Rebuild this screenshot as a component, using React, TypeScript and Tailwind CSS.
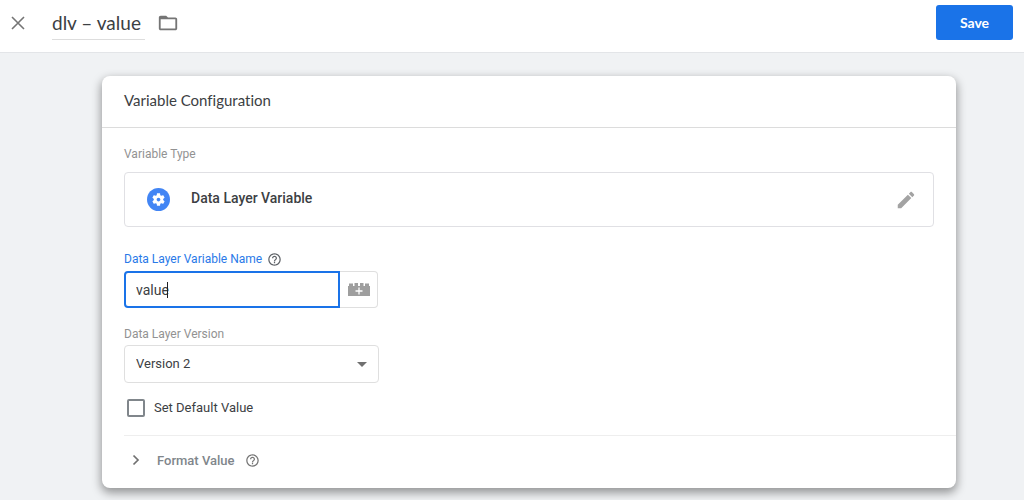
import { useState } from "react";

function HelpIcon({ className }: { className: string }) {
  return (
    <svg viewBox="0 0 24 24" className={className} fill="currentColor" aria-hidden="true">
      <path d="M11 18h2v-2h-2v2zm1-16C6.48 2 2 6.48 2 12s4.480 10 10 10 10-4.480 10-10S17.520 2 12 2zm0 18c-4.410 0-8-3.590-8-8s3.590-8 8-8 8 3.590 8 8-3.590 8-8 8zm0-14c-2.210 0-4 1.790-4 4h2c0-1.100.9-2 2-2s2 .9 2 2c0 2-3 1.750-3 5h2c0-2.250 3-2.500 3-5 0-2.210-1.790-4-4-4z" />
    </svg>
  );
}

function Header() {
  const [name, setName] = useState("dlv – value");
  return (
    <header className="flex h-[53px] items-start border-b border-[#e3e5e8] bg-white pl-2 pr-[11px] pt-[5px]">
      <button type="button" aria-label="Close" className="mt-2 flex size-5 items-center justify-center text-[#757575]">
        <svg viewBox="0 0 14 14" className="size-[14px]" fill="none" stroke="currentColor" strokeWidth="1.6" aria-hidden="true">
          <path d="M1 1l12 12M13 1L1 13" />
        </svg>
      </button>
      <input
        aria-label="Variable name"
        value={name}
        onChange={(e) => setName(e.target.value)}
        className="ml-6 h-[35px] w-[93px] border-b border-[#dddddd] bg-transparent font-['Lato',sans-serif] text-[19px] text-[#3c4043] outline-none"
      />
      <button type="button" aria-label="Choose folder" className="ml-3 mt-[7px] text-[#757575]">
        <svg viewBox="0 0 24 24" className="size-[22px]" fill="currentColor" aria-hidden="true">
          <path d="M20 6h-8l-2-2H4c-1.100 0-1.990.9-1.990 2L2 18c0 1.100.9 2 2 2h16c1.100 0 2-.9 2-2V8c0-1.100-.9-2-2-2zm0 12H4V8h16v10z" />
        </svg>
      </button>
      <button type="button" className="ml-auto h-[35px] w-[77px] rounded-[3px] bg-[#1a73e8] font-['Lato',sans-serif] text-[14px] font-bold text-white">
        Save
      </button>
    </header>
  );
}

export default function App() {
  const [value, setValue] = useState("value");
  return (
    <div className="min-h-screen bg-[#f0f2f4] font-['Roboto',sans-serif] text-[#3c4043]">
      <Header />
      <main className="pb-3 pl-[102px] pr-[68px] pt-[23px]">
        <section className="rounded-lg bg-white shadow-[0_4px_10px_1px_rgba(0,0,0,0.38)]">
          <h1 className="flex h-[52px] items-center border-b border-[#dcdcdc] px-[22px] pb-[2px] font-['Lato',sans-serif] text-[15px] [font-variant-ligatures:none]">
            Variable Configuration
          </h1>
          <div className="pl-[22px] pt-[18px]">
            <div className="pr-[22px]">
              <h2 className="text-[12px] leading-4 text-[#929292]">Variable Type</h2>
              <div className="mt-[10px] flex h-[55px] items-center rounded-[4px] border border-[#e0e0e4] pl-[22px] pr-4">
                <span className="flex size-[23px] items-center justify-center rounded-full bg-[#4285f4] text-white">
                  <svg viewBox="0 0 24 24" className="size-[15px]" fill="currentColor" aria-hidden="true">
                    <path d="M19.430 12.980c.04-.32.07-.64.07-.98s-.03-.66-.07-.98l2.110-1.650c.19-.15.24-.42.12-.64l-2-3.460c-.12-.22-.39-.3-.61-.22l-2.490 1c-.52-.4-1.080-.73-1.690-.98l-.38-2.650C14.460 2.180 14.250 2 14 2h-4c-.25 0-.46.18-.49.42l-.38 2.650c-.61.25-1.170.59-1.690.98l-2.490-1c-.23-.09-.49 0-.61.22l-2 3.460c-.13.22-.07.49.12.64l2.110 1.650c-.04.32-.07.65-.07.98s.03.66.07.98l-2.110 1.650c-.19.15-.24.42-.12.64l2 3.460c.12.22.39.3.61.22l2.490-1c.52.4 1.080.73 1.690.98l.38 2.650c.03.24.24.42.49.42h4c.25 0 .46-.18.49-.42l.38-2.650c.61-.25 1.170-.59 1.690-.98l2.490 1c.23.09.49 0 .61-.22l2-3.460c.12-.22.07-.49-.12-.64l-2.110-1.650zM12 15c-1.660 0-3-1.340-3-3s1.340-3 3-3 3 1.340 3 3-1.340 3-3 3z" />
                  </svg>
                </span>
                <span className="ml-[21px] pb-[3px] text-[14px] font-medium">Data Layer Variable</span>
                <button type="button" aria-label="Edit variable type" className="ml-auto text-[#a3a3a3]">
                  <svg viewBox="0 0 24 24" className="size-[22px]" fill="currentColor" aria-hidden="true">
                    <path d="M3 17.250V21h3.750L17.810 9.940l-3.750-3.750L3 17.250zM20.710 7.040c.39-.39.39-1.020 0-1.410l-2.340-2.340c-.39-.39-1.020-.39-1.410 0l-1.830 1.830 3.750 3.750 1.830-1.830z" />
                  </svg>
                </button>
              </div>
            </div>

            <div className="mt-6 flex h-4 items-center gap-[5px]">
              <label htmlFor="dlv-name" className="text-[12px] leading-4 text-[#2979e8]">Data Layer Variable Name</label>
              <HelpIcon className="size-[15px] text-[#5f6368]" />
            </div>
            <div className="mt-1 flex w-[254px]">
              <div className="relative min-w-0 flex-1">
                <input
                  id="dlv-name"
                  value={value}
                  onChange={(e) => setValue(e.target.value)}
                  className="block h-[37px] w-full rounded-l-[4px] border-2 border-[#1a73e8] px-[10px] text-[14px] caret-transparent outline-none"
                />
                <span className="absolute left-[43px] top-[11px] h-4 w-px bg-[#202124]" aria-hidden="true" />
              </div>
              <button type="button" aria-label="Insert variable" className="flex h-[37px] w-[38px] items-center justify-center rounded-r-[4px] border border-l-0 border-[#dfdfdf]">
                <svg viewBox="0 0 22 13" className="h-[13px] w-[22px]" aria-hidden="true">
                  <path d="M0 13V3h1V.500h4V3h1.500V0H10v3h2V0h3.500v3H17V.500h4V3h1v10z" fill="#9e9e9e" />
                  <path d="M11 4.500v7M7.500 8h7" stroke="#fff" strokeWidth="1.300" />
                </svg>
              </button>
            </div>

            <label htmlFor="dlv-version" className="mt-[18px] block text-[12px] leading-4 text-[#929292]">Data Layer Version</label>
            <div className="relative mt-[3px] w-[255px]">
              <select id="dlv-version" className="block h-[38px] w-full appearance-none rounded-[4px] border border-[#dfdfdf] bg-white pb-px pl-[11px] text-[13px] outline-none">
                <option>Version 2</option>
                <option>Version 1</option>
              </select>
              <svg viewBox="0 0 10 5" className="pointer-events-none absolute right-3 top-[17px] h-[5px] w-[10px] text-[#707070]" fill="currentColor" aria-hidden="true">
                <path d="M0 0h10L5 5z" />
              </svg>
            </div>

            <label className="mt-[15px] flex h-5 w-fit items-center gap-[9px] pl-[3px] text-[13px]">
              <input type="checkbox" className="size-[18px] appearance-none rounded-[2px] border-2 border-[#80868b] bg-white checked:bg-[#1a73e8]" />
              Set Default Value
            </label>

            <div className="mt-[17px] flex h-[53px] items-center border-t border-[#eeeeee] pb-[3px]">
              <button type="button" aria-expanded="false" className="flex items-center text-[13px] font-medium text-[#80868b]">
                <svg viewBox="0 0 24 24" className="size-6 text-[#707070]" fill="none" stroke="currentColor" strokeWidth="1.700" aria-hidden="true">
                  <path d="M9.500 6.500L14 11l-4.500 4.500" />
                </svg>
                <span className="ml-[9px]">Format Value</span>
              </button>
              <HelpIcon className="ml-[10px] size-[15px] text-[#757575]" />
            </div>
          </div>
        </section>
      </main>
    </div>
  );
}
